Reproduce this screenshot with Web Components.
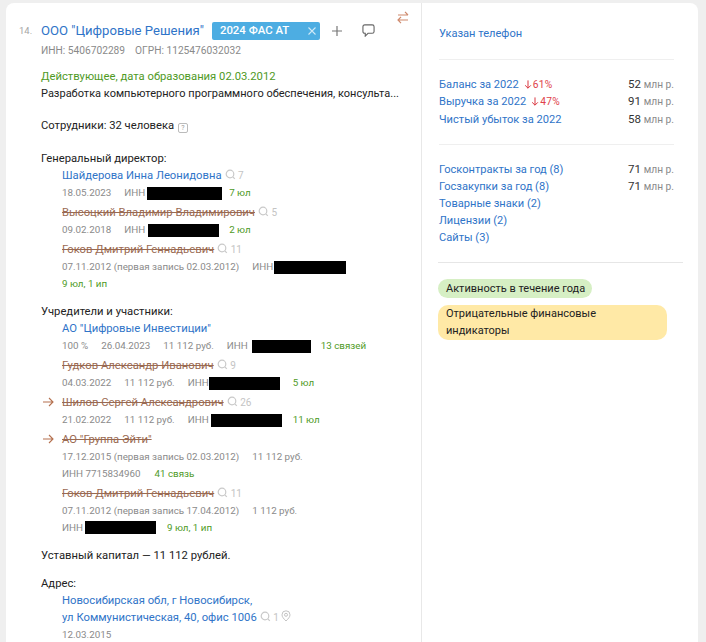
<!DOCTYPE html>
<html>
<head>
<meta charset="utf-8">
<style>
  html, body { margin: 0; padding: 0; height: 642px; overflow: hidden; background: #efefef; }
  body { font-family: Roboto, "Noto Sans", sans-serif; font-size: 11.25px; line-height: 17px; color: #222; }
</style>
</head>
<body>
<company-card>
  <div slot="left">
    <company-head></company-head>

    <info-block top="9">
      <div style="color:#4f9a1f">Действующее, дата образования 02.03.2012</div>
      <div style="white-space:nowrap;font-size:11px">Разработка компьютерного программного обеспечения, консульта...</div>
    </info-block>

    <info-block top="15">Сотрудники: 32 человека <help-mark></help-mark></info-block>

    <info-block top="16">
      Генеральный директор:
      <person-row name="Шайдерова Инна Леонидовна" count="7" first>
        <m-i>18.05.2023</m-i><m-i gap="13">ИНН</m-i><black-box w="75" gap="2"></black-box><m-i gap="7" green>7 юл</m-i>
      </person-row>
      <person-row name="Высоцкий Владимир Владимирович" count="5" gone>
        <m-i>09.02.2018</m-i><m-i gap="13">ИНН</m-i><black-box w="71" gap="3"></black-box><m-i gap="10" green>2 юл</m-i>
      </person-row>
      <person-row name="Гоков Дмитрий Геннадьевич" count="11" gone>
        <m-i>07.11.2012 (первая запись 02.03.2012)</m-i><m-i gap="13">ИНН</m-i><black-box w="72" gap="1"></black-box>
        <div slot="extra"><m-i green>9 юл, 1 ип</m-i></div>
      </person-row>
    </info-block>

    <info-block top="11">
      Учредители и участники:
      <person-row name="АО &quot;Цифровые Инвестиции&quot;" first>
        <m-i>100 %</m-i><m-i gap="13">26.04.2023</m-i><m-i gap="13">11 112 руб.</m-i><m-i gap="13">ИНН</m-i><black-box w="59" gap="4"></black-box><m-i gap="10" green>13 связей</m-i>
      </person-row>
      <person-row name="Гудков Александр Иванович" count="9" gone>
        <m-i>04.03.2022</m-i><m-i gap="13">11 112 руб.</m-i><m-i gap="13">ИНН</m-i><black-box w="71" gap="0"></black-box><m-i gap="13" green>5 юл</m-i>
      </person-row>
      <person-row name="Шилов Сергей Александрович" count="26" gone arrow>
        <m-i>21.02.2022</m-i><m-i gap="13">11 112 руб.</m-i><m-i gap="13">ИНН</m-i><black-box w="71" gap="2"></black-box><m-i gap="11" green>11 юл</m-i>
      </person-row>
      <person-row name="АО &quot;Группа Эйти&quot;" gone arrow>
        <m-i>17.12.2015 (первая запись 02.03.2012)</m-i><m-i gap="13">11 112 руб.</m-i>
        <div slot="extra"><m-i>ИНН 7715834960</m-i><m-i gap="14" green>41 связь</m-i></div>
      </person-row>
      <person-row name="Гоков Дмитрий Геннадьевич" count="11" gone>
        <m-i>07.11.2012 (первая запись 17.04.2012)</m-i><m-i gap="13">1 112 руб.</m-i>
        <div slot="extra"><m-i>ИНН</m-i><black-box w="71" gap="2"></black-box><m-i gap="11" green>9 юл, 1 ип</m-i></div>
      </person-row>
    </info-block>

    <info-block top="11">Уставный капитал — 11 112 рублей.</info-block>
    <info-block top="11">
      Адрес:
      <address-row></address-row>
    </info-block>
  </div>

  <side-panel slot="right"></side-panel>
</company-card>

<script>
(function () {

  const SEARCH = `<svg width="11" height="11" viewBox="0 0 11 11" fill="none" stroke="#c9c9c9" stroke-width="1.2"><circle cx="5" cy="5" r="3.8"/><path d="M7.8 7.8 L9.8 9.8"/></svg>`;

  class CompanyCard extends HTMLElement {
    constructor() {
      super();
      this.attachShadow({ mode: "open" }).innerHTML = `
        <style>
          :host { display: flex; margin: 3px 8px 0 6px; height: 660px; background: #fff; border-radius: 8px 8px 0 0; overflow: hidden; }
          .left { width: 416px; flex: none; box-sizing: border-box; padding: 18px 0 0 13px; border-right: 1px solid #e8e8e8; }
          .right { flex: 1; min-width: 0; }
        </style>
        <div class="left"><slot name="left"></slot></div>
        <div class="right"><slot name="right"></slot></div>
      `;
    }
  }

  class CompanyHead extends HTMLElement {
    constructor() {
      super();
      this.attachShadow({ mode: "open" }).innerHTML = `
        <style>
          :host { display: block; position: relative; }
          .top { display: flex; align-items: center; height: 19px; }
          .num { width: 22px; font-size: 9.5px; color: #a5a5a5; }
          .title { font-size: 13.1px; color: #2f74c8; white-space: nowrap; }
          .tag { display: flex; align-items: center; justify-content: space-between; box-sizing: border-box; width: 108px; height: 18px; margin-left: 8px; padding: 0 3px 0 8px;
                 background: #4dade2; border-radius: 2px; color: #fff; font-size: 11.4px; font-weight: 500; }
          .plus { margin-left: 12px; display: flex; }
          .bubble { margin-left: 20px; display: flex; }
          .ids { margin: 2px 0 0 22px; font-size: 10.2px; color: #8a8a8a; }
          .ids span + span { margin-left: 10px; }
          .swap { position: absolute; right: 12px; top: -10px; display: flex; }
        </style>
        <div class="top">
          <span class="num">14.</span>
          <span class="title">ООО "Цифровые Решения"</span>
          <span class="tag">2024 ФАС АТ
            <svg width="10" height="10" viewBox="0 0 10 10" stroke="#cfe9f7" stroke-width="1.1"><path d="M1.5 1.5 L8.5 8.5 M8.5 1.5 L1.5 8.5"/></svg>
          </span>
          <span class="plus"><svg width="10" height="10" viewBox="0 0 10 10" stroke="#777" stroke-width="1.2"><path d="M5 0 V10 M0 5 H10"/></svg></span>
          <span class="bubble"><svg width="13" height="13" viewBox="0 0 14 14" fill="none" stroke="#666" stroke-width="1.2"><path d="M3 1 H11 Q13 1 13 3 V8 Q13 10 11 10 H6.5 L3.5 13 V10 H3 Q1 10 1 8 V3 Q1 1 3 1 Z"/></svg></span>
        </div>
        <div class="ids"><span>ИНН: 5406702289</span><span>ОГРН: 1125476032032</span></div>
        <span class="swap"><svg width="12" height="13" viewBox="0 0 12 13" fill="none" stroke="#cf8a6d" stroke-width="1.2"><path d="M1 4 H11 M8 .8 L11 4 M11 9 H1 M4 5.8 L1 9 L4 12.2"/></svg></span>
      `;
    }
  }

  class InfoBlock extends HTMLElement {
    constructor() {
      super();
      this.attachShadow({ mode: "open" }).innerHTML = `
        <style>:host { display: block; padding-left: 22px; }</style>
        <slot></slot>
      `;
    }
    connectedCallback() {
      this.style.marginTop = (this.getAttribute("top") || 0) + "px";
    }
  }

  class HelpMark extends HTMLElement {
    constructor() {
      super();
      this.attachShadow({ mode: "open" }).innerHTML = `
        <style>
          :host { display: inline-block; box-sizing: border-box; width: 10px; height: 10px; margin-left: 1px; border: 1px solid #bbb; border-radius: 2px;
                  font-size: 7px; line-height: 8px; text-align: center; color: #999; vertical-align: -1px; }
        </style>?
      `;
    }
  }

  class PersonRow extends HTMLElement {
    constructor() {
      super();
      this.attachShadow({ mode: "open" });
    }
    connectedCallback() {
      const gone = this.hasAttribute("gone");
      const count = this.getAttribute("count");
      this.shadowRoot.innerHTML = `
        <style>
          :host { display: block; position: relative; padding-left: 21px; margin-top: 3px; }
          :host([first]) { margin-top: 0; }
          .name { color: ${gone ? "#9a6a52" : "#2f74c8"}; font-size: 11.25px; ${gone ? "text-decoration: line-through;" : ""} }
          .count { color: #c4c4c4; font-size: 10px; margin-left: 3px; }
          .count svg { vertical-align: -1px; }
          .meta { color: #8a8a8a; white-space: nowrap; display: flex; align-items: center; height: 17px; }
          .arrow { position: absolute; left: 2px; top: 3px; display: flex; }
        </style>
        ${this.hasAttribute("arrow") ? `<span class="arrow"><svg width="11" height="10" viewBox="0 0 11 10" fill="none" stroke="#b5714f" stroke-width="1.1"><path d="M0 5 H10 M6 1 L10 5 L6 9"/></svg></span>` : ""}
        <div><span class="name">${this.getAttribute("name").replace(/"/g, "&quot;")}</span>${count ? `<span class="count">${SEARCH} ${count}</span>` : ""}</div>
        <div class="meta"><slot></slot></div>
        <slot name="extra"></slot>
      `;
    }
  }

  class MetaItem extends HTMLElement {
    constructor() {
      super();
      this.attachShadow({ mode: "open" }).innerHTML = `
        <style>
          :host { display: inline-block; font-size: 9.8px; line-height: 17px; color: #8a8a8a; white-space: nowrap; vertical-align: top; }
          :host([green]) { color: #4f9a1f; }
        </style>
        <slot></slot>
      `;
    }
    connectedCallback() {
      this.style.marginLeft = (this.getAttribute("gap") || 0) + "px";
    }
  }

  class BlackBox extends HTMLElement {
    constructor() {
      super();
      this.attachShadow({ mode: "open" }).innerHTML = `
        <style>:host { display: inline-block; height: 13px; background: #000; vertical-align: top; margin-top: 2px; }</style>
      `;
    }
    connectedCallback() {
      this.style.width = this.getAttribute("w") + "px";
      this.style.marginLeft = (this.getAttribute("gap") || 0) + "px";
    }
  }

  class AddressRow extends HTMLElement {
    constructor() {
      super();
      this.attachShadow({ mode: "open" }).innerHTML = `
        <style>
          :host { display: block; padding-left: 21px; }
          .addr { color: #2f74c8; font-size: 11.25px; }
          .count { color: #c4c4c4; font-size: 10px; margin-left: 3px; }
          .count svg { vertical-align: -1px; }
          .date { font-size: 9.8px; color: #8a8a8a; }
        </style>
        <div class="addr">Новосибирская обл, г Новосибирск,<br>ул Коммунистическая, 40, офис 1006<span class="count">${SEARCH} 1
          <svg width="10" height="12" viewBox="0 0 10 12" fill="none" stroke="#c4c4c4" stroke-width="1"><path d="M5 11 C2.5 8.5 1 6.8 1 4.8 A4 4 0 0 1 9 4.8 C9 6.8 7.5 8.5 5 11 Z"/><circle cx="5" cy="4.8" r="1.5"/></svg></span></div>
        <div class="date">12.03.2015</div>
      `;
    }
  }

  class SideLine extends HTMLElement {
    constructor() {
      super();
      this.attachShadow({ mode: "open" });
    }
    connectedCallback() {
      const drop = this.getAttribute("drop");
      const value = this.getAttribute("value");
      this.shadowRoot.innerHTML = `
        <style>
          :host { display: flex; justify-content: space-between; height: 17.5px; }
          .link { color: #2f74c8; font-size: 11.1px; }
          .drop { color: #e0414a; font-size: 10.2px; letter-spacing: .3px; margin-left: 5px; }
          .drop svg { vertical-align: -1px; margin-right: 1px; }
          .val { color: #333; font-size: 11.5px; }
          .val small { color: #8a8a8a; font-size: 10.2px; }
        </style>
        <span><span class="link">${this.getAttribute("label")}</span>${drop ? `<span class="drop"><svg width="8" height="9" viewBox="0 0 9 11" fill="none" stroke="#d8343d" stroke-width="1.2"><path d="M4.5 .5 V10 M1 6.5 L4.5 10 L8 6.5"/></svg>${drop}</span>` : ""}</span>
        ${value ? `<span class="val">${value} <small>млн р.</small></span>` : ""}
      `;
    }
  }

  class StatusPill extends HTMLElement {
    constructor() {
      super();
      this.attachShadow({ mode: "open" }).innerHTML = `
        <style>
          :host { display: block; width: fit-content; box-sizing: border-box; padding: 1px 7px 0 8px; height: 19px; border-radius: 10px; font-size: 11px; line-height: 17px; color: #222; background: #d6efc4; }
          :host([warn]) { background: #ffe9a6; width: 229px; height: 35px; margin-top: 7px; padding: 0 8px; }
        </style>
        <slot></slot>
      `;
    }
  }

  class SidePanel extends HTMLElement {
    constructor() {
      super();
      this.attachShadow({ mode: "open" }).innerHTML = `
        <style>
          :host { display: block; padding: 22px 0 0 16px; }
          .sec { margin: 0 24px 16px 1px; padding-bottom: 16px; border-bottom: 1px solid #efefef; }
          .sec.last { margin: 0 15px 16px 0; padding-left: 1px; border-bottom-color: #e6e6e6; }
          .inner { margin-right: 9px; }
          .inner side-line, .sec.last > side-line { height: 17px; }
        </style>
        <div class="sec"><side-line label="Указан телефон"></side-line></div>
        <div class="sec">
          <side-line label="Баланс за 2022" drop="61%" value="52"></side-line>
          <side-line label="Выручка за 2022" drop="47%" value="91"></side-line>
          <side-line label="Чистый убыток за 2022" value="58"></side-line>
        </div>
        <div class="sec last">
          <div class="inner">
            <side-line label="Госконтракты за год (8)" value="71"></side-line>
            <side-line label="Госзакупки за год (8)" value="71"></side-line>
          </div>
          <side-line label="Товарные знаки (2)"></side-line>
          <side-line label="Лицензии (2)"></side-line>
          <side-line label="Сайты (3)"></side-line>
        </div>
        <status-pill>Активность в течение года</status-pill>
        <status-pill warn>Отрицательные финансовые индикаторы</status-pill>
      `;
    }
  }

  customElements.define("company-card", CompanyCard);
  customElements.define("company-head", CompanyHead);
  customElements.define("info-block", InfoBlock);
  customElements.define("help-mark", HelpMark);
  customElements.define("person-row", PersonRow);
  customElements.define("m-i", MetaItem);
  customElements.define("black-box", BlackBox);
  customElements.define("address-row", AddressRow);
  customElements.define("side-line", SideLine);
  customElements.define("status-pill", StatusPill);
  customElements.define("side-panel", SidePanel);

})();
</script>
</body>
</html>
